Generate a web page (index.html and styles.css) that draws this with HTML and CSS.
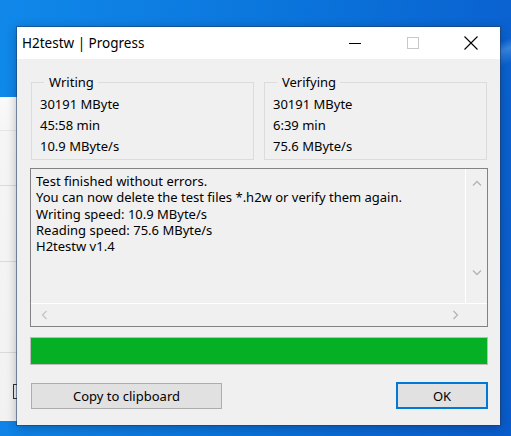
FILE: index.html
```html
<!DOCTYPE html>
<html lang="en">
<head>
  <meta charset="UTF-8" />
  <title>H2testw | Progress</title>
  <link rel="stylesheet" href="styles.css">
</head>
<body>

  <div class="desktop">
    <!-- Window behind the dialog -->
    <div class="back-window">
      <div class="back-line l1"></div>
      <div class="back-line l2"></div>
      <div class="back-line l3"></div>
      <div class="back-line l4"></div>
      <div class="back-check"></div>
    </div>

    <!-- Dialog -->
    <div class="dialog">
      <div class="titlebar">
        <span class="title">H2testw | Progress</span>
        <div class="caption-buttons">
          <span class="cap-btn">
            <svg width="12" height="12" viewBox="0 0 12 12"><path d="M0 6.5h12" stroke="#000" stroke-width="1"/></svg>
          </span>
          <span class="cap-btn">
            <svg width="12" height="12" viewBox="0 0 12 12"><rect x="0.5" y="0.5" width="11" height="11" fill="none" stroke="#c8c8c8" stroke-width="1"/></svg>
          </span>
          <span class="cap-btn">
            <svg width="14" height="14" viewBox="0 0 14 14"><path d="M0.5 0.5l13 13M13.5 0.5l-13 13" stroke="#000" stroke-width="1.1"/></svg>
          </span>
        </div>
      </div>

      <div class="content">
        <div class="groups">
          <fieldset class="group">
            <legend>Writing</legend>
            <p>30191 MByte</p>
            <p>45:58 min</p>
            <p>10.9 MByte/s</p>
          </fieldset>
          <fieldset class="group">
            <legend>Verifying</legend>
            <p>30191 MByte</p>
            <p>6:39 min</p>
            <p>75.6 MByte/s</p>
          </fieldset>
        </div>

        <div class="memo">
          <div class="memo-main">
            <div class="memo-text">
              Test finished without errors.<br>
              You can now delete the test files *.h2w or verify them again.<br>
              Writing speed: 10.9 MByte/s<br>
              Reading speed: 75.6 MByte/s<br>
              H2testw v1.4
            </div>
            <div class="vscroll">
              <svg width="10" height="6" viewBox="0 0 10 6"><path d="M1 5.5l4-4 4 4" fill="none" stroke="#b4b4b4" stroke-width="1.3"/></svg>
              <svg width="10" height="6" viewBox="0 0 10 6"><path d="M1 0.5l4 4 4-4" fill="none" stroke="#b4b4b4" stroke-width="1.3"/></svg>
            </div>
          </div>
          <div class="hscroll">
            <svg width="6" height="10" viewBox="0 0 6 10"><path d="M5.5 1l-4 4 4 4" fill="none" stroke="#c4c4c4" stroke-width="1.3"/></svg>
            <svg width="6" height="10" viewBox="0 0 6 10"><path d="M0.5 1l4 4-4 4" fill="none" stroke="#b4b4b4" stroke-width="1.3"/></svg>
          </div>
        </div>

        <div class="progress">
          <div class="progress-fill" style="width: 100%"></div>
        </div>

        <div class="buttons">
          <button class="btn btn-copy">Copy to clipboard</button>
          <button class="btn btn-ok">OK</button>
        </div>
      </div>
    </div>
  </div>

</body>
</html>
```

FILE: styles.css
```css
/* Reset & Base */
* {
  margin: 0;
  padding: 0;
  box-sizing: border-box;
}

body, html {
  width: 511px;
  height: 436px;
  overflow: hidden;
  font-family: "Noto Sans", "Open Sans", sans-serif;
  color: #000;
}

.desktop {
  position: relative;
  width: 511px;
  height: 436px;
  background:
    linear-gradient(160deg, transparent 36%, rgba(140, 200, 255, 0.35) 37.5%, transparent 40%),
    linear-gradient(100deg, #1088ea 0%, #0a72da 55%, #0a5ccc 100%);
}

/* Window behind the dialog */
.back-window {
  position: absolute;
  left: 0;
  top: 97px;
  width: 30px;
  height: 324px;
  background: linear-gradient(#fafafa, #f5f5f5 12%, #f2f2f2);
}

.back-line {
  position: absolute;
  left: 0;
  width: 30px;
  height: 1px;
  background: #dadada;
}

.l1 { top: 33px; background: #e6e6e6; }
.l2 { top: 88px; }
.l3 { top: 164px; }
.l4 { top: 255px; }

.back-check {
  position: absolute;
  left: 13px;
  top: 287px;
  width: 12px;
  height: 15px;
  border: 1px solid #333;
}

/* Dialog */
.dialog {
  position: absolute;
  left: 17px;
  top: 27px;
  width: 483px;
  height: 398px;
  background: #f0f0f0;
  box-shadow: 0 0 0 1px rgba(30, 60, 110, 0.55), 0 2px 10px rgba(0, 0, 0, 0.3);
  display: flex;
  flex-direction: column;
}

.titlebar {
  height: 32px;
  background: #fff;
  display: flex;
  align-items: center;
  justify-content: space-between;
}

.title {
  padding-left: 5px;
  font-family: "Noto Sans", sans-serif;
  font-size: 13.5px;
  color: #000;
}

.caption-buttons {
  display: flex;
}

.cap-btn {
  width: 58px;
  height: 32px;
  display: flex;
  align-items: center;
  justify-content: center;
}

.content {
  flex: 1;
  padding: 15px 12px 0 14px;
  font-size: 13px;
}

.groups {
  display: flex;
  gap: 10px;
}

.group {
  width: 223px;
  height: 86px;
  border: 1px solid #dcdcdc;
  padding: 4px 0 0 8px;
}

.group legend {
  margin-left: 4px;
  padding: 0 4px 0 5px;
  line-height: 16px;
}

.group p {
  line-height: 21px;
}

/* Log memo */
.memo {
  margin-top: 8px;
  width: 458px;
  height: 159px;
  margin-left: -1px;
  border: 1px solid #828282;
  display: flex;
  flex-direction: column;
}

.memo-main {
  flex: 1;
  display: flex;
}

.memo-text {
  flex: 1;
  padding: 4px 0 0 5px;
  line-height: 16.3px;
  white-space: nowrap;
  border-bottom: 1px solid #fff;
}

.vscroll {
  width: 22px;
  border-left: 1px solid #fff;
  border-bottom: 1px solid #fff;
  display: flex;
  flex-direction: column;
  justify-content: space-between;
  align-items: center;
  padding: 11px 0 27px;
}

.hscroll {
  height: 22px;
  display: flex;
  justify-content: space-between;
  align-items: center;
  padding: 0 28px 0 10px;
}

/* Progress bar */
.progress {
  margin-top: 10px;
  margin-left: -1px;
  width: 458px;
  height: 28px;
  border: 1px solid #bcbcbc;
  background: #e6e6e6;
}

.progress-fill {
  height: 100%;
  background: #06b025;
}

/* Buttons */
.buttons {
  margin-top: 17px;
  display: flex;
  justify-content: space-between;
  align-items: center;
}

.btn {
  height: 26px;
  font-family: "Noto Sans", sans-serif;
  font-size: 13px;
  color: #000;
  background: #e1e1e1;
  border: 1px solid #adadad;
}

.btn-copy {
  width: 191px;
}

.btn-ok {
  width: 92px;
  height: 27px;
  border: 2px solid #0078d7;
}
```
